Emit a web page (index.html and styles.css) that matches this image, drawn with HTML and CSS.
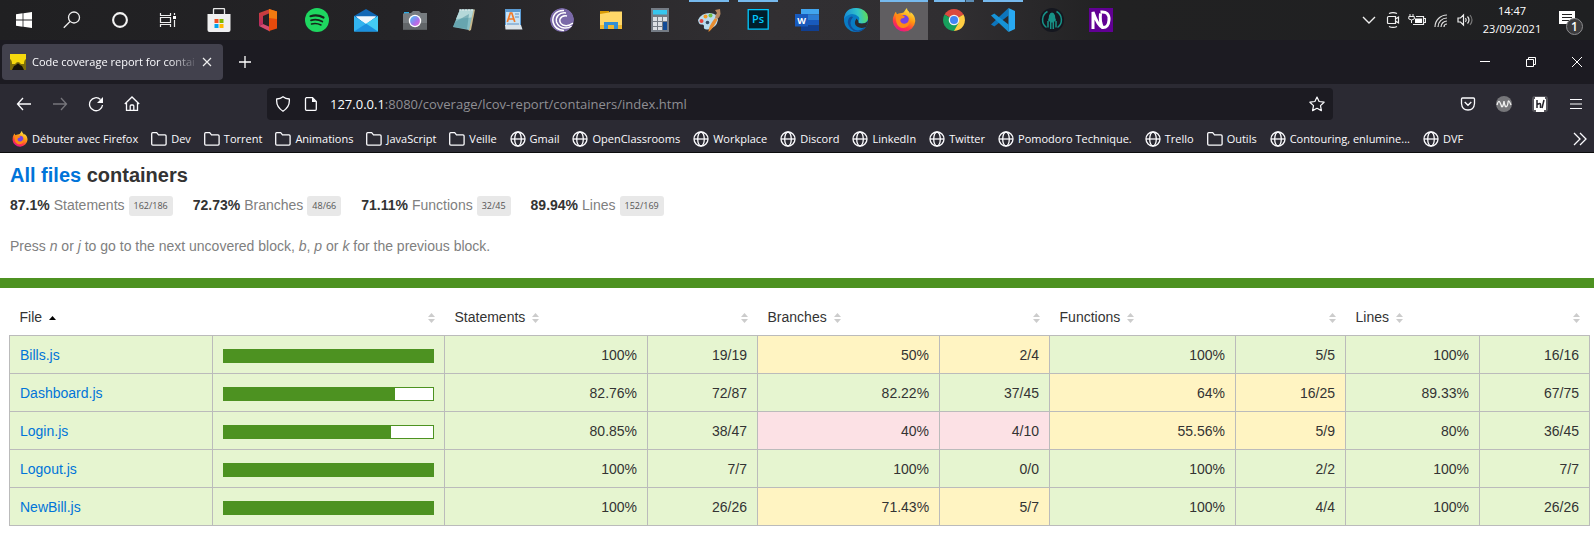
FILE: index.html
```html
<!DOCTYPE html>
<html lang="fr">
<head>
<meta charset="utf-8">
<meta name="viewport" content="width=device-width, initial-scale=1">
<title>Code coverage report for containers</title>
<link rel="stylesheet" href="styles.css">
</head>
<body>
<svg class="defs" aria-hidden="true">
  <defs>
    <symbol id="folder" viewBox="0 0 16 16"><path d="M.7 13V2.700q0-1 1-1h4l1.800 2.100h6.500q1.100 0 1.100 1.100v8.100q0 1.100-1.100 1.100h-12.200q-1.100 0-1.100-1.100z" fill="none" stroke="currentColor" stroke-width="1.300"/></symbol>
    <symbol id="globe" viewBox="0 0 16 16"><g fill="none" stroke="currentColor" stroke-width="1.300"><circle cx="8" cy="8" r="7"/><ellipse cx="8" cy="8" rx="3.300" ry="7"/><path d="M1 8h14"/></g></symbol>
    <symbol id="sort" viewBox="0 0 7 10"><path d="M0 4L3.500 0L7 4zM0 6h7L3.500 10z" fill="#ccc"/></symbol>
    <symbol id="sorted" viewBox="0 0 7 10"><path d="M0 7L3.500 3L7 7z" fill="#000"/></symbol>
    <clipPath id="disc"><circle cx="12" cy="12" r="12"/></clipPath>
    <linearGradient id="ffBody" x1=".8" y1="0" x2=".3" y2="1"><stop offset="0" stop-color="#fff14f"/><stop offset=".45" stop-color="#ff980e"/><stop offset=".75" stop-color="#ff3647"/><stop offset="1" stop-color="#e3138f"/></linearGradient>
    <symbol id="firefox" viewBox="0 0 24 24"><path d="M2.200 6.500Q3 4.500 4 3.800q.2 1.700 1.200 2.400Q7 5 9 5.200q3-.2 4-2.700Q13.500 1 15 0q-.2 2 1.800 3.600Q18 4.700 18 6q.6-.8.400-2 4.800 3.300 4.900 9A11.300 11.300 0 0 1 .8 13.500Q.5 9.500 2.200 6.500z" fill="url(#ffBody)"/><circle cx="12" cy="12" r="5" fill="#7542e5"/><path d="M4 7q3-1.500 6 0l3 1.800q-.7 1.600-3.600 1.700-1.800 1.200-.8 3.200 1.500 2.800 5 1.900 3.600-1.300 3-4.900 2.200 3.800-.6 7.200-4.500 3.700-8.800.8Q3 15.500 4 7z" fill="#ff8a16"/></symbol>
    <linearGradient id="office" x1="0" y1="0" x2="0" y2="1"><stop offset="0" stop-color="#d04431"/><stop offset="1" stop-color="#b52767"/></linearGradient>
    <linearGradient id="edge" x1="0" y1=".5" x2="1" y2=".4"><stop offset="0" stop-color="#1689d6"/><stop offset=".6" stop-color="#32c5c9"/><stop offset="1" stop-color="#62dc50"/></linearGradient>
    <linearGradient id="lens" x1="0" y1="0" x2="1" y2="1"><stop offset="0" stop-color="#43c8f5"/><stop offset=".6" stop-color="#a970ec"/><stop offset="1" stop-color="#ed67cc"/></linearGradient>
  </defs>
</svg>

<header class="taskbar">
  <nav class="system" aria-label="Système">
    <button aria-label="Démarrer"><svg width="16" height="16" viewBox="0 0 16 16"><path d="M0 2.200L6.600 1.300V7.600H0zM7.400 1.200L16 0V7.600H7.400zM0 8.400H6.600V14.700L0 13.800zM7.400 8.400H16V16L7.400 14.800z" fill="#fff"/></svg></button>
    <button aria-label="Rechercher"><svg width="18" height="18" viewBox="0 0 18 18"><g fill="none" stroke="#eee" stroke-width="1.300"><circle cx="11" cy="6.500" r="5.500"/><path d="M7 10.500L.8 16.700"/></g></svg></button>
    <button aria-label="Cortana"><svg width="18" height="18" viewBox="0 0 18 18"><circle cx="9" cy="9" r="6.900" fill="none" stroke="#f3f3f3" stroke-width="2.100"/></svg></button>
    <button aria-label="Vue des tâches"><svg width="18" height="18" viewBox="0 0 18 18"><path d="M1.500 2v2.500h10V2M1.500 16v-2.500h10V16M1.500 6.500h10v5h-10zM15.500 2v2M15.500 9v7" fill="none" stroke="#eee" stroke-width="1.200"/><path d="M14 5h3v3h-3z" fill="#fff"/></svg></button>
  </nav>
  <nav class="apps" aria-label="Applications">
    <button aria-label="Microsoft Store"><svg width="24" height="24" viewBox="0 0 24 24"><path d="M6.500 7V1.500q0-1 1-1h9q1 0 1 1V7" fill="none" stroke="#e8e8e8" stroke-width="1.300"/><path d="M.5 6h23v16q0 2-2 2h-19q-2 0-2-2z" fill="#f0f0f0"/><path d="M7.500 11h4v4h-4z" fill="#f25022"/><path d="M12.500 11h4v4h-4z" fill="#7fba00"/><path d="M7.500 16h4v4h-4z" fill="#00a4ef"/><path d="M12.500 16h4v4h-4z" fill="#ffb900"/></svg></button>
    <button aria-label="Office"><svg width="24" height="24" viewBox="0 0 24 24"><path d="M14 1L3 5v13l4-2V8l7-3z" fill="url(#office)"/><path d="M3 18l4-2 7 3v4.500z" fill="#d54b70"/><path d="M13 1l8 2.500v17L13 23z" fill="#e64a0c"/><path d="M13 1l8 2.500V11l-8-1z" fill="#f17a10"/></svg></button>
    <button aria-label="Spotify"><svg width="24" height="24" viewBox="0 0 24 24"><circle cx="12" cy="12" r="12" fill="#1ed760"/><g fill="none" stroke="#16251b" stroke-linecap="round"><path d="M5.500 8.200q7-2 13 1.300" stroke-width="2.200"/><path d="M6 12.300q6-1.700 11.300 1.200" stroke-width="1.800"/><path d="M6.500 16q5-1.300 9.500 1" stroke-width="1.500"/></g></svg></button>
    <button aria-label="Courrier"><svg width="24" height="24" viewBox="0 0 24 24"><path d="M0 8L12 1l12 7v4H0z" fill="#0f67b5"/><path d="M2 8.500h20L12 17z" fill="#eef6fb"/><path d="M0 8l24 15.500H0z" fill="#32b4ef"/><path d="M24 8v15.500H0z" fill="#1b91df"/><path d="M24 8v15.500L12 15.500z" fill="#43cdf4"/><path d="M2 8.500h20L12 15.500z" fill="#eef6fb"/></svg></button>
    <button aria-label="Caméra"><svg width="24" height="24" viewBox="0 0 24 24"><path d="M1 4h5v2H1z" fill="#2dabe3"/><path d="M8 5l2-2h6l2 2h6v16.500H0V5.500z" fill="#777c80"/><path d="M0 15h24v6.500H0z" fill="#626669"/><circle cx="12" cy="13" r="6.200" fill="#fff"/><circle cx="12" cy="13" r="4.900" fill="url(#lens)"/></svg></button>
    <button aria-label="Bloc-notes"><svg width="24" height="24" viewBox="0 0 24 24"><path d="M8 2.500l15-1-4 20.500-2 1z" fill="#c7b88c"/><path d="M8 1.500h13.500L17 22 1 19z" fill="#86bdc4"/><path d="M8 1.500h13.500l-2 8L4 11z" fill="#b5d8d9"/><path d="M3 14l14-8-2 15-14-2z" fill="#4e929e" opacity=".55"/><path d="M8 1v2M11 1v2M14 1v2M17 1v2M20 1v2" stroke="#e7edee"/></svg></button>
    <button aria-label="WordPad"><svg width="24" height="24" viewBox="0 0 24 24"><path d="M4 1h16v17H4z" fill="#5b9bd3"/><path d="M5 4h14v13H5z" fill="#c9e3f6"/><path d="M4 17h16l1.500 4.500h-17z" fill="#dbe3e9"/><path d="M6.300 14l3-9h1.500l3 9M7.500 11h5" fill="none" stroke="#f27a28" stroke-width="1.700"/><path d="M14 6h4M14 9h4M6 16h12" stroke="#6490be"/></svg></button>
    <button aria-label="BitTorrent"><svg width="24" height="24" viewBox="0 0 24 24"><g clip-path="url(#disc)"><circle cx="12" cy="12" r="12" fill="#7a69a8"/><g fill="none" stroke="#fff" stroke-width="1.500"><path d="M14 2.500C6 2 2 8 3 14q2 8 11 8.500"/><path d="M16 5C9 4 5.500 9 6.500 14q2 5.500 8 6 4 .3 7-2"/><path d="M17 8q-5-1-7 3-1 4 3 6 5 2 10-2"/></g></g></svg></button>
    <button aria-label="Explorateur de fichiers"><svg width="24" height="24" viewBox="0 0 24 24"><path d="M1 3h9v4H1z" fill="#d99b06"/><path d="M1 6l9-1.500 1-1h12V20H1z" fill="#ffd869"/><path d="M1 17h22v4H1z" fill="#efb72f"/><path d="M5 21v-7h14v7h-4v-4H9v4z" fill="#338fd5"/></svg></button>
    <button aria-label="Calculatrice"><svg width="24" height="24" viewBox="0 0 24 24"><rect x="3" width="18" height="24" fill="#747b84"/><path d="M5 2h14v4.500H5z" fill="#37c6ee"/><path d="M5 9h4v4H5zM10 9h4v4h-4zM15 9h4v4h-4zM5 14h4v4H5zM10 14h4v4h-4zM5 19h4v3H5zM10 19h4v3h-4z" fill="#dce0e4"/><path d="M15 14h4v8h-4z" fill="#114b96"/></svg></button>
    <button class="open" aria-label="Paint"><svg width="24" height="24" viewBox="0 0 24 24"><path d="M1 12q3-7 12-7 8 .5 8 7-1.500 8-10 9.500-5 .5-4-3.500 0-2-2.500-1.500T1 12z" fill="#b8dcee"/><circle cx="4.500" cy="13" r="2" fill="#e6453c"/><circle cx="8.500" cy="8.500" r="2" fill="#f49925"/><circle cx="13.500" cy="7.500" r="2" fill="#72bf45"/><circle cx="10.500" cy="14.500" r="1.800" fill="#344b63"/><path d="M11.500 24q-.5-5 6.500-14l2.500 1.500Q16 21 11.500 24z" fill="#e88d31"/><path d="M18 10q0-3 2-5l-2-3 5-1 .5 5q-1 4-3 5z" fill="#b88961"/></svg></button>
    <button class="open" aria-label="Photoshop"><svg width="24" height="24" viewBox="0 0 24 24"><path d="M2.200 1.700h20v19.500h-20z" fill="#001e2b" stroke="#00c8ff" stroke-width="1.300"/><text class="ps" x="12" y="15" text-anchor="middle">Ps</text></svg></button>
    <button aria-label="Word"><svg width="24" height="24" viewBox="0 0 24 24"><path d="M6 1h18v5.500H6z" fill="#41a5ee"/><path d="M6 6.500h18V12H6z" fill="#2b7cd3"/><path d="M6 12h18v5.500H6z" fill="#185abd"/><path d="M6 17.500h18V23H6z" fill="#103f91"/><path d="M0 6h13v12.500H0z" fill="#185abd"/><text class="word" x="6.500" y="15.500" text-anchor="middle">W</text></svg></button>
    <button aria-label="Edge"><svg width="24" height="24" viewBox="0 0 24 24"><circle cx="12" cy="12" r="12" fill="#087bc4"/><path d="M0 11Q1 0 12 0q11 .5 12 9.500 0 6-6.500 6-4 0-3-2.500 1.700-1.700.3-4Q10 4.500 4.500 7 1 8.500 0 11z" fill="url(#edge)"/><path d="M9 9q-5 6 0 11.500 5 4 11-.5l2-1q-1.600 2-4 3.500-7 3-11.500-2T5 10q2-2.500 4-1z" fill="#124d98"/><path d="M14.500 13q-1 2.500 3 2.500 4 .2 6.500-2.500-.3 3-2 6-5.500 2-9-.5-4-3-.5-8z" fill="#2b2a2f"/></svg></button>
    <button class="open active" aria-label="Firefox"><svg width="24" height="24" viewBox="0 0 24 24"><use href="#firefox"/></svg></button>
    <button class="open stacked" aria-label="Chrome"><svg width="24" height="24" viewBox="0 0 24 24"><path d="M12 12L2.500 6.500a11 11 0 0 1 19 0z" fill="#db4a3f"/><path d="M12 12h0L21.500 6.500A11 11 0 0 1 12 23z" fill="#ffcd42"/><path d="M2.500 6.500A11 11 0 0 0 12 23l4.500-8L12 12z" fill="#179f5c"/><path d="M12 7h9.700v-.5H12z" fill="#db4a3f"/><circle cx="12" cy="12" r="5.300" fill="#f1f1f1"/><circle cx="12" cy="12" r="4" fill="#4285f4"/></svg></button>
    <button class="open" aria-label="Visual Studio Code"><svg width="24" height="24" viewBox="0 0 24 24"><path d="M17.500 0v7.500L3.300 18.500 0 16.500z" fill="#0d75bc"/><path d="M0 7.500l3.300-2L17.500 16.500V24z" fill="#1693d6"/><path d="M17.500 0L24 3v18l-6.500 3z" fill="#28a9f2"/></svg></button>
    <button aria-label="GitKraken"><svg width="24" height="24" viewBox="0 0 24 24"><circle cx="12" cy="12" r="12" fill="#15171f"/><g fill="none" stroke="#179287" stroke-width="1.500"><path d="M7.500 3.500a9.500 9.500 0 0 0-1 16M16.500 3.500a9.500 9.500 0 0 1 1 16M10.700 13v8M13.300 13v8M8 13v6.500M16 13v6.500"/></g><path d="M8 12q1-2 1-4.500 1-3 3-3t3 3q0 2.500 1 4.500-.5 2-2.500 1.500L12 15l-1.500-1.500Q8.500 14 8 12z" fill="#179287"/></svg></button>
    <button aria-label="NVDA"><svg width="24" height="24" viewBox="0 0 24 24"><path d="M0 0h24v24H0z" fill="#610094"/><path d="M4 21V4q5 14 9.500 15.500M11.500 4q9-1 8.500 8-.5 8-6.500 7.500-3-6-2-14" fill="none" stroke="#fff" stroke-width="3"/></svg></button>
  </nav>
  <div class="tray">
    <button aria-label="Afficher les icônes cachées"><svg width="16" height="16" viewBox="0 0 16 16"><path d="M2 5l6 6 6-6" fill="none" stroke="#eee" stroke-width="1.400"/></svg></button>
    <button aria-label="Conversation"><svg width="16" height="16" viewBox="0 0 16 16"><path d="M3.500 4.500h7v7h-7q-1 0-1-1v-5q0-1 1-1zM10.500 7l3-2v6l-3-2M4 1.500Q8-.3 12 1.500M4 14.500q4 1.800 8 0" fill="none" stroke="#eee" stroke-width="1.200"/></svg></button>
    <button aria-label="Batterie"><svg width="18" height="16" viewBox="0 0 18 16"><path d="M5 12.500h10.500v-8H8M16 6.500h1.500v4H16" fill="none" stroke="#eee" stroke-width="1.200"/><path d="M7 6.500h7v4.500H7z" fill="#fff"/><path d="M2 2v2M5 2v2M.8 4.500h5.500V7q-2.500 2-5.500 0zM3.500 8v3" fill="none" stroke="#eee"/></svg></button>
    <button aria-label="Wi-Fi"><svg width="16" height="16" viewBox="0 0 16 16"><g fill="none" stroke="#ddd" stroke-width="1.200"><path d="M2 15A12 12 0 0 1 14 3M5 15a9 9 0 0 1 9-9M8 15a6 6 0 0 1 6-6M11 15a3 3 0 0 1 3-3"/></g></svg></button>
    <button aria-label="Volume"><svg width="16" height="16" viewBox="0 0 16 16"><g fill="none" stroke="#eee" stroke-width="1.200"><path d="M1 6h2.500L6.500 3v10l-3-3H1zM8.500 6q1.500 2 0 4M10.500 4.500q3 3.500 0 7"/><path d="M13 3q4 5 0 10" stroke="#777"/></g></svg></button>
    <div class="clock"><time>14:47</time><time>23/09/2021</time></div>
    <button class="notice" aria-label="Notifications"><svg width="26" height="26" viewBox="0 0 26 26"><path d="M1 1h16v13h-4l-3 3v-3H1z" fill="#fff"/><path d="M4 4.500h10M4 7.500h10M4 10.500h7" stroke="#222"/><circle cx="16.500" cy="16.500" r="8" fill="#3b3b3d" stroke="#8c8c8e"/><text x="16.500" y="21" text-anchor="middle">1</text></svg></button>
  </div>
</header>

<section class="browser" aria-label="Firefox">
  <div class="tabs">
    <div class="tab">
      <svg width="16" height="16" viewBox="0 0 16 16"><path d="M0 0h16v16H0z" fill="#f5d90e"/><path d="M0 5q2 1 2 5h3q3-4 6 0h3q0-4 2-5v11H0z" fill="#7c6d0a"/><path d="M2 16l2-4 2-1q2-3 4 0l2 1 2 4z" fill="#15130a"/></svg>
      <span class="tab-title">Code coverage report for contai</span>
      <button aria-label="Fermer l’onglet"><svg width="10" height="10" viewBox="0 0 10 10"><path d="M1 1l8 8M9 1L1 9" stroke="#eee" stroke-width="1.200"/></svg></button>
    </div>
    <button class="new-tab" aria-label="Nouvel onglet"><svg width="12" height="12" viewBox="0 0 12 12"><path d="M6 0v12M0 6h12" stroke="#fff" stroke-width="1.300"/></svg></button>
    <div class="window-controls">
      <button aria-label="Réduire"><svg width="10" height="10" viewBox="0 0 10 10"><path d="M0 4.500h10" stroke="#fff"/></svg></button>
      <button aria-label="Restaurer"><svg width="10" height="10" viewBox="0 0 10 10"><path d="M.5 2.500h7v7h-7zM2.500 2.500v-2h7v7h-2" fill="none" stroke="#fff"/></svg></button>
      <button aria-label="Fermer"><svg width="10" height="10" viewBox="0 0 10 10"><path d="M0 0l10 10M10 0L0 10" stroke="#fff"/></svg></button>
    </div>
  </div>
  <div class="toolbar">
    <button aria-label="Précédent"><svg width="16" height="16" viewBox="0 0 16 16"><path d="M15 8H1.500M7 2L1.500 8 7 14" fill="none" stroke="#fbfbfe" stroke-width="1.300"/></svg></button>
    <button disabled aria-label="Suivant"><svg width="16" height="16" viewBox="0 0 16 16"><path d="M1 8h13.500M9 2l5.500 6L9 14" fill="none" stroke="#77767c" stroke-width="1.300"/></svg></button>
    <button aria-label="Actualiser"><svg width="16" height="16" viewBox="0 0 16 16"><path d="M12.500 3.500A6.500 6.500 0 1 0 14.500 9" fill="none" stroke="#fbfbfe" stroke-width="1.300"/><path d="M15 1v6H9z" fill="#fbfbfe"/></svg></button>
    <button aria-label="Accueil"><svg width="16" height="16" viewBox="0 0 16 16"><path d="M.8 8L8 1l7.200 7M2.500 7v7.300h11V7M6.200 14v-4q0-1 1-1h1.600q1 0 1 1v4" fill="none" stroke="#fbfbfe" stroke-width="1.300"/></svg></button>
    <div class="address">
      <svg width="16" height="16" viewBox="0 0 16 16"><path d="M8 .8q2.500 2 6.300 2.200.8 8-6.300 12.200Q.9 11 1.700 3 5.500 2.800 8 .8z" fill="none" stroke="#fbfbfe" stroke-width="1.300"/></svg>
      <svg width="16" height="16" viewBox="0 0 16 16"><path d="M3 1.700h6.500L13.300 5.500v7.800q0 1-1 1H3.500q-1 0-1-1V2.700q0-1 1-1z" fill="none" stroke="#fbfbfe" stroke-width="1.300"/><path d="M9 1.500l4.500 4.500H9z" fill="#fbfbfe"/></svg>
      <a class="url" href="#report"><b>127.0.0.1</b>:8080/coverage/lcov-report/containers/index.html</a>
      <button aria-label="Ajouter aux marque-pages"><svg width="16" height="16" viewBox="0 0 16 16"><path d="M8 1l2.100 4.500 5 .7-3.600 3.400.9 5L8 12.300l-4.400 2.300.9-5L.9 6.200l5-.7z" fill="none" stroke="#fbfbfe" stroke-width="1.200" stroke-linejoin="round"/></svg></button>
    </div>
    <button aria-label="Pocket"><svg width="16" height="16" viewBox="0 0 16 16"><path d="M2.500 2h11q1 0 1 1v4.500q-.5 6.500-6.500 6.500T1.500 7.500V3q0-1 1-1zM4.700 6L8 9.300 11.300 6" fill="none" stroke="#fbfbfe" stroke-width="1.300"/></svg></button>
    <button aria-label="Extension W"><svg width="16" height="16" viewBox="0 0 16 16"><circle cx="8" cy="8" r="8" fill="#76767a"/><path d="M1 9Q2.500 3.500 4 6.500t1.500 4Q7 12 8 5q1 7 2.500 5.500 1 0 1.500-4T15 9" fill="none" stroke="#f0f0f0" stroke-width="1.300"/></svg></button>
    <button aria-label="Extension h/"><svg width="16" height="16" viewBox="0 0 16 16"><rect width="16" height="16" rx="3" fill="#55545b"/><path d="M3 1h10v2h1v11h-2v2H4v-2H2V3h1z" fill="#fff"/><path d="M5 4v8M5.500 8.500q3-2 3 0V12M10 12l2-8" fill="none" stroke="#25242b" stroke-width="1.500"/></svg></button>
    <button aria-label="Menu"><svg width="14" height="12" viewBox="0 0 14 12"><path d="M1 1.500h12M1 6h12M1 10.500h12" stroke="#fbfbfe" stroke-width="1.200"/></svg></button>
  </div>
  <nav class="bookmarks" aria-label="Marque-pages">
    <a href="#"><svg><use href="#firefox"/></svg>Débuter avec Firefox</a>
    <a href="#"><svg><use href="#folder"/></svg>Dev</a>
    <a href="#"><svg><use href="#folder"/></svg>Torrent</a>
    <a href="#"><svg><use href="#folder"/></svg>Animations</a>
    <a href="#"><svg><use href="#folder"/></svg>JavaScript</a>
    <a href="#"><svg><use href="#folder"/></svg>Veille</a>
    <a href="#"><svg><use href="#globe"/></svg>Gmail</a>
    <a href="#"><svg><use href="#globe"/></svg>OpenClassrooms</a>
    <a href="#"><svg><use href="#globe"/></svg>Workplace</a>
    <a href="#"><svg><use href="#globe"/></svg>Discord</a>
    <a href="#"><svg><use href="#globe"/></svg>LinkedIn</a>
    <a href="#"><svg><use href="#globe"/></svg>Twitter</a>
    <a href="#"><svg><use href="#globe"/></svg>Pomodoro Technique.</a>
    <a href="#"><svg><use href="#globe"/></svg>Trello</a>
    <a href="#"><svg><use href="#folder"/></svg>Outils</a>
    <a href="#"><svg><use href="#globe"/></svg>Contouring, enlumine...</a>
    <a href="#"><svg><use href="#globe"/></svg>DVF</a>
    <button aria-label="Plus de marque-pages"><svg viewBox="0 0 16 16"><path d="M2 2l6 6-6 6M8 2l6 6-6 6" fill="none" stroke="#fbfbfe" stroke-width="1.300"/></svg></button>
  </nav>
</section>

<main id="report">
  <div class="summary">
    <h1><a href="#">All files</a> containers</h1>
    <div class="metrics">
      <div><strong>87.1%</strong> Statements <span class="fraction">162/186</span></div>
      <div><strong>72.73%</strong> Branches <span class="fraction">48/66</span></div>
      <div><strong>71.11%</strong> Functions <span class="fraction">32/45</span></div>
      <div><strong>89.94%</strong> Lines <span class="fraction">152/169</span></div>
    </div>
    <p>Press <em>n</em> or <em>j</em> to go to the next uncovered block, <em>b</em>, <em>p</em> or <em>k</em> for the previous block.</p>
  </div>
  <div class="status-line"></div>
  <div class="table-wrap">
    <table>
      <colgroup><col class="c-file"><col class="c-pic"><col class="c-statements"><col class="c-abs"><col class="c-branches"><col class="c-abs"><col class="c-functions"><col class="c-abs"><col class="c-lines"><col class="c-abs"></colgroup>
      <thead>
        <tr>
          <th><button>File<svg><use href="#sorted"/></svg></button></th>
          <th class="end"><button aria-label="Trier par graphique"><svg><use href="#sort"/></svg></button></th>
          <th><button>Statements<svg><use href="#sort"/></svg></button></th>
          <th class="end"><button aria-label="Trier par total d’instructions"><svg><use href="#sort"/></svg></button></th>
          <th><button>Branches<svg><use href="#sort"/></svg></button></th>
          <th class="end"><button aria-label="Trier par total de branches"><svg><use href="#sort"/></svg></button></th>
          <th><button>Functions<svg><use href="#sort"/></svg></button></th>
          <th class="end"><button aria-label="Trier par total de fonctions"><svg><use href="#sort"/></svg></button></th>
          <th><button>Lines<svg><use href="#sort"/></svg></button></th>
          <th class="end"><button aria-label="Trier par total de lignes"><svg><use href="#sort"/></svg></button></th>
        </tr>
      </thead>
      <tbody>
        <tr><td><a href="#">Bills.js</a></td><td><div class="chart"><div style="width:100%"></div></div></td><td>100%</td><td>19/19</td><td class="medium">50%</td><td class="medium">2/4</td><td>100%</td><td>5/5</td><td>100%</td><td>16/16</td></tr>
        <tr><td><a href="#">Dashboard.js</a></td><td><div class="chart"><div style="width:82%"></div></div></td><td>82.76%</td><td>72/87</td><td>82.22%</td><td>37/45</td><td class="medium">64%</td><td class="medium">16/25</td><td>89.33%</td><td>67/75</td></tr>
        <tr><td><a href="#">Login.js</a></td><td><div class="chart"><div style="width:80%"></div></div></td><td>80.85%</td><td>38/47</td><td class="low">40%</td><td class="low">4/10</td><td class="medium">55.56%</td><td class="medium">5/9</td><td>80%</td><td>36/45</td></tr>
        <tr><td><a href="#">Logout.js</a></td><td><div class="chart"><div style="width:100%"></div></div></td><td>100%</td><td>7/7</td><td>100%</td><td>0/0</td><td>100%</td><td>2/2</td><td>100%</td><td>7/7</td></tr>
        <tr><td><a href="#">NewBill.js</a></td><td><div class="chart"><div style="width:100%"></div></div></td><td>100%</td><td>26/26</td><td class="medium">71.43%</td><td class="medium">5/7</td><td>100%</td><td>4/4</td><td>100%</td><td>26/26</td></tr>
      </tbody>
    </table>
  </div>
</main>
</body>
</html>
```
FILE: styles.css
```css
* { box-sizing: border-box; }
body {
  margin: 0;
  background: #fff;
  color: #333;
  font: 14px/17px "Liberation Sans", Arial, sans-serif;
}
a { color: #0074d9; text-decoration: none; }
button {
  display: flex;
  align-items: center;
  justify-content: center;
  margin: 0;
  padding: 0;
  border: 0;
  background: none;
  color: inherit;
  font: inherit;
}
svg { flex: none; }
.defs { position: absolute; width: 0; height: 0; }

/* Windows taskbar */
.taskbar {
  display: flex;
  height: 40px;
  background: linear-gradient(90deg, #202022, #242326 25%, #312f32 48%, #302e31 60%, #212122 70%, #1f2022);
  color: #fff;
  font: 11px/18px "Open Sans", "Noto Sans", sans-serif;
}
.system, .apps, .tray { display: flex; }
.system button { width: 48px; }
.apps { margin-left: 2px; }
.apps button { position: relative; width: 49px; }
.apps .active { background: #605e61; background-clip: content-box; padding-right: 1px; }
.apps .open::before {
  content: "";
  position: absolute;
  top: 0;
  left: 5px;
  width: 40px;
  height: 2px;
  background: #76b9ed;
}
.apps .active::before { left: 0; width: 48px; }
.apps .stacked::before { background: linear-gradient(90deg, #76b9ed 31px, #34495a 31px 32px, #5c8db5 32px); }
.ps { fill: #00c8ff; font: 600 11px "Open Sans", sans-serif; }
.word { fill: #fff; font: 700 9px "Open Sans", sans-serif; }
.tray { margin-left: auto; padding-right: 7px; }
.tray button { width: 24px; }
.clock {
  display: flex;
  flex-direction: column;
  align-items: center;
  justify-content: center;
  width: 70px;
}
.tray .notice { width: 40px; }
.notice svg { margin: 6px 0 0 7px; }
.notice text { fill: #fff; font: 600 12px "Open Sans", sans-serif; }

/* Browser window */
.browser {
  border-bottom: 1px solid #0c0c0d;
  background: #2b2a33;
  color: #fbfbfe;
  font: 11px/16px "Open Sans", "Noto Sans", sans-serif;
}
.tabs {
  display: flex;
  align-items: center;
  height: 44px;
  padding-left: 2px;
  background: #1c1b22;
}
.tab {
  display: flex;
  align-items: center;
  gap: 6px;
  width: 221px;
  height: 36px;
  padding: 0 8px;
  border-radius: 4px;
  background: #42414d;
}
.tab-title {
  flex: 1;
  white-space: nowrap;
  mask-image: linear-gradient(270deg, transparent, #000 30px);
}
.tab button { width: 16px; height: 20px; margin-left: -6px; }
.new-tab { width: 32px; height: 32px; margin-left: 6px; }
.window-controls { display: flex; margin-left: auto; margin-right: -6px; }
.window-controls button { width: 46px; height: 40px; }
.toolbar {
  display: flex;
  align-items: center;
  gap: 4px;
  height: 40px;
  padding: 0 2px 0 8px;
}
.toolbar > button { width: 32px; height: 32px; }
.address {
  display: flex;
  flex: 1;
  align-items: center;
  gap: 12px;
  height: 32px;
  margin: 0 115px;
  padding: 0 8px;
  border-radius: 4px;
  background: #1c1b22;
}
.url { flex: 1; margin-left: -1px; color: #8f8f94; font-size: 13px; }
.url b { color: #fbfbfe; font-weight: 400; }
.bookmarks {
  display: flex;
  align-items: center;
  gap: 13px;
  height: 28px;
  padding: 1px 6px 0 12px;
  white-space: nowrap;
}
.bookmarks a {
  display: flex;
  align-items: center;
  gap: 4px;
  color: #fbfbfe;
}
.bookmarks svg { width: 16px; height: 16px; }
.bookmarks button { margin-left: auto; }

/* Coverage report */
.summary { padding: 10px 10px 22px; color: #808080; }
h1 { margin: 0 0 9px; color: #333; font-size: 20px; line-height: 24px; }
.metrics { display: flex; gap: 20px; line-height: 19px; }
.metrics div { display: flex; gap: 4px; }
.metrics strong { color: #333; }
.fraction {
  padding: 0 5px;
  border-radius: 3px;
  background: #e8e8e8;
  color: #555;
  font: 9px/20px "Open Sans", sans-serif;
}
.summary p { margin: 20px 0 0; line-height: 20px; }
.status-line { height: 10px; background: #4d9221; }
.table-wrap { padding: 10px 4px 10px 9px; }
table { width: 100%; border-collapse: collapse; table-layout: fixed; }
.c-file, .c-statements { width: 12.85%; }
.c-pic { width: 14.68%; }
.c-abs { width: 6.96%; }
.c-branches { width: 11.52%; }
.c-functions { width: 11.77%; }
.c-lines { width: 8.48%; }
th { padding: 11px 10px 9px; font-weight: 400; }
th button { gap: 7px; height: 17px; }
th.end button { margin-left: auto; }
th svg { width: 7px; height: 10px; }
td {
  padding: 11px 10px 9px;
  border: 1px solid #bbb;
  background: #e6f5d0;
  text-align: right;
}
td:first-child { text-align: left; }
td.medium { background: #fff4c2; }
td.low { background: #fce1e5; }
.chart { height: 14px; border: 1px solid #4d9221; background: #fff; }
.chart div { height: 12px; background: #4d9221; }
```
